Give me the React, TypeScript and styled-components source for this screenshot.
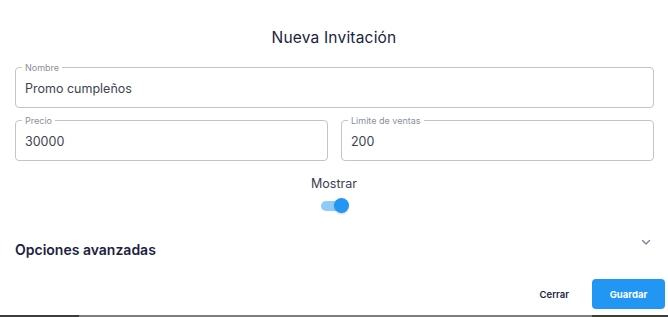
import React from "react";
import styled, { createGlobalStyle } from "styled-components";

const Global = createGlobalStyle`
  html, body { margin: 0; padding: 0; background: #ffffff; }
  body { font-family: "Inter", "Noto Sans", sans-serif; overflow: hidden; }
  * { box-sizing: border-box; }
`;

const Dialog = styled.div`
  width: 668px;
  height: 317px;
  display: flex;
  flex-direction: column;
  background: #fff;
  position: relative;
`;

const Title = styled.h2`
  margin: 0;
  padding-top: 28px;
  height: 63px;
  text-align: center;
  font-size: 15.5px;
  font-weight: 400;
  color: #1b2340;
  letter-spacing: 0.2px;
`;

const Form = styled.div`
  display: flex;
  flex-direction: column;
  gap: 8px;
  padding: 0 14px 0 15px;
`;

const Row = styled.div`
  display: grid;
  grid-template-columns: 1fr 1fr;
  gap: 13px;
`;

const Field = styled.fieldset`
  margin: 0;
  height: 45px;
  border: 1px solid #c4c4c4;
  border-radius: 4px;
  padding: 0 9px;
  position: relative;
  min-width: 0;
`;

const Legend = styled.legend`
  font-size: 9px;
  color: #8a8f99;
  padding: 0 3px;
  margin-left: -3px;
  line-height: 1;
`;

const Value = styled.div`
  font-size: 12.5px;
  color: #3d4451;
  padding-top: 9px;
`;

const Center = styled.div`
  display: flex;
  flex-direction: column;
  align-items: center;
  padding-top: 15px;
`;

const ShowLabel = styled.div`
  font-size: 12.5px;
  color: #3a4050;
`;

const Switch = styled.div`
  margin-top: 7px;
  width: 28px;
  height: 15px;
  position: relative;
  display: flex;
  align-items: center;
  margin-left: 2px;
`;

const Track = styled.div`
  width: 22px;
  height: 10px;
  border-radius: 5px;
  background: #8fcaf9;
`;

const Thumb = styled.div`
  position: absolute;
  right: 0;
  top: 0;
  width: 15px;
  height: 15px;
  border-radius: 50%;
  background: #2196f3;
  box-shadow: 0 1px 2px rgba(0, 0, 0, 0.2);
`;

const Accordion = styled.div`
  display: flex;
  align-items: center;
  justify-content: space-between;
  padding: 0 16px 0 15px;
  margin-top: 17px;
  height: 30px;
`;

const AccTitle = styled.div`
  font-size: 14px;
  font-weight: 600;
  color: #1b2340;
  margin-top: 8px;
`;

const Chevron = styled.svg`
  width: 12px;
  height: 12px;
  margin-top: -6px;
`;

const Actions = styled.div`
  display: flex;
  justify-content: flex-end;
  align-items: center;
  gap: 23px;
  padding: 0 3px 0 0;
  margin-top: 19px;
`;

const TextButton = styled.button`
  border: 0;
  background: transparent;
  font-family: inherit;
  font-size: 9.5px;
  font-weight: 600;
  color: #1b2340;
  padding: 0;
`;

const PrimaryButton = styled.button`
  border: 0;
  width: 73px;
  height: 30px;
  border-radius: 4px;
  background: #2196f3;
  color: #fff;
  font-family: inherit;
  font-size: 9.5px;
  font-weight: 700;
`;

const Scrollbar = styled.div`
  position: absolute;
  left: 0;
  right: 0;
  bottom: 0;
  height: 2px;
  display: grid;
  grid-template-columns: 79px 513px 1fr;
`;

const Seg = styled.div<{ $light?: boolean }>`
  background: ${(p) => (p.$light ? "#7d7d7d" : "#3c3c3c")};
`;

export default function App() {
  return (
    <>
      <Global />
      <Dialog>
        <Title>Nueva Invitación</Title>
        <Form>
          <Field>
            <Legend>Nombre</Legend>
            <Value>Promo cumpleños</Value>
          </Field>
          <Row>
            <Field>
              <Legend>Precio</Legend>
              <Value>30000</Value>
            </Field>
            <Field>
              <Legend>Limite de ventas</Legend>
              <Value>200</Value>
            </Field>
          </Row>
        </Form>
        <Center>
          <ShowLabel>Mostrar</ShowLabel>
          <Switch>
            <Track />
            <Thumb />
          </Switch>
        </Center>
        <Accordion>
          <AccTitle>Opciones avanzadas</AccTitle>
          <Chevron viewBox="0 0 12 12" fill="none">
            <path d="M2.5 4.5 L6 8 L9.5 4.5" stroke="#7b8298" strokeWidth="1.3" strokeLinecap="round" strokeLinejoin="round" />
          </Chevron>
        </Accordion>
        <Actions>
          <TextButton>Cerrar</TextButton>
          <PrimaryButton>Guardar</PrimaryButton>
        </Actions>
        <Scrollbar>
          <Seg />
          <Seg $light />
          <Seg />
        </Scrollbar>
      </Dialog>
    </>
  );
}
